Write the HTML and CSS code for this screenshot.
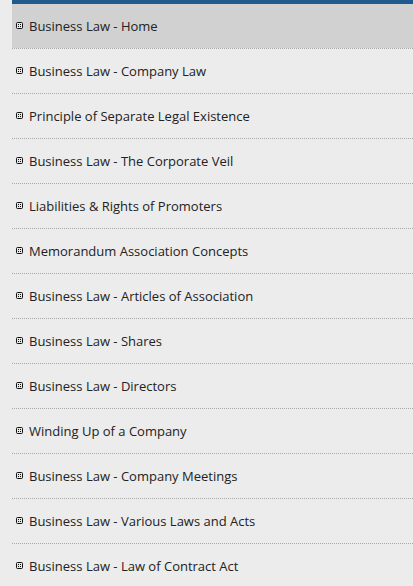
FILE: index.html
```html
<!DOCTYPE html>
<html>
<head>
<meta charset="utf-8">
<link rel="stylesheet" href="styles.css">
</head>
<body>
<nav class="sidebar">
  <ul class="menu">
    <li class="item active"><a href="#"><svg class="bullet" width="7" height="7" viewBox="0 0 7 7"><rect x="0.5" y="0.5" width="6" height="6" rx="1" fill="#e8e8e8" stroke="#111"/><rect x="2" y="2" width="1" height="1" fill="#111"/><rect x="4" y="2" width="1" height="1" fill="#111"/><rect x="2" y="4" width="1" height="1" fill="#111"/><rect x="4" y="4" width="1" height="1" fill="#111"/></svg><span>Business Law - Home</span></a></li>
    <li class="item"><a href="#"><svg class="bullet" width="7" height="7" viewBox="0 0 7 7"><rect x="0.5" y="0.5" width="6" height="6" rx="1" fill="#e8e8e8" stroke="#111"/><rect x="2" y="2" width="1" height="1" fill="#111"/><rect x="4" y="2" width="1" height="1" fill="#111"/><rect x="2" y="4" width="1" height="1" fill="#111"/><rect x="4" y="4" width="1" height="1" fill="#111"/></svg><span>Business Law - Company Law</span></a></li>
    <li class="item"><a href="#"><svg class="bullet" width="7" height="7" viewBox="0 0 7 7"><rect x="0.5" y="0.5" width="6" height="6" rx="1" fill="#e8e8e8" stroke="#111"/><rect x="2" y="2" width="1" height="1" fill="#111"/><rect x="4" y="2" width="1" height="1" fill="#111"/><rect x="2" y="4" width="1" height="1" fill="#111"/><rect x="4" y="4" width="1" height="1" fill="#111"/></svg><span>Principle of Separate Legal Existence</span></a></li>
    <li class="item"><a href="#"><svg class="bullet" width="7" height="7" viewBox="0 0 7 7"><rect x="0.5" y="0.5" width="6" height="6" rx="1" fill="#e8e8e8" stroke="#111"/><rect x="2" y="2" width="1" height="1" fill="#111"/><rect x="4" y="2" width="1" height="1" fill="#111"/><rect x="2" y="4" width="1" height="1" fill="#111"/><rect x="4" y="4" width="1" height="1" fill="#111"/></svg><span>Business Law - The Corporate Veil</span></a></li>
    <li class="item"><a href="#"><svg class="bullet" width="7" height="7" viewBox="0 0 7 7"><rect x="0.5" y="0.5" width="6" height="6" rx="1" fill="#e8e8e8" stroke="#111"/><rect x="2" y="2" width="1" height="1" fill="#111"/><rect x="4" y="2" width="1" height="1" fill="#111"/><rect x="2" y="4" width="1" height="1" fill="#111"/><rect x="4" y="4" width="1" height="1" fill="#111"/></svg><span>Liabilities &amp; Rights of Promoters</span></a></li>
    <li class="item"><a href="#"><svg class="bullet" width="7" height="7" viewBox="0 0 7 7"><rect x="0.5" y="0.5" width="6" height="6" rx="1" fill="#e8e8e8" stroke="#111"/><rect x="2" y="2" width="1" height="1" fill="#111"/><rect x="4" y="2" width="1" height="1" fill="#111"/><rect x="2" y="4" width="1" height="1" fill="#111"/><rect x="4" y="4" width="1" height="1" fill="#111"/></svg><span>Memorandum Association Concepts</span></a></li>
    <li class="item"><a href="#"><svg class="bullet" width="7" height="7" viewBox="0 0 7 7"><rect x="0.5" y="0.5" width="6" height="6" rx="1" fill="#e8e8e8" stroke="#111"/><rect x="2" y="2" width="1" height="1" fill="#111"/><rect x="4" y="2" width="1" height="1" fill="#111"/><rect x="2" y="4" width="1" height="1" fill="#111"/><rect x="4" y="4" width="1" height="1" fill="#111"/></svg><span>Business Law - Articles of Association</span></a></li>
    <li class="item"><a href="#"><svg class="bullet" width="7" height="7" viewBox="0 0 7 7"><rect x="0.5" y="0.5" width="6" height="6" rx="1" fill="#e8e8e8" stroke="#111"/><rect x="2" y="2" width="1" height="1" fill="#111"/><rect x="4" y="2" width="1" height="1" fill="#111"/><rect x="2" y="4" width="1" height="1" fill="#111"/><rect x="4" y="4" width="1" height="1" fill="#111"/></svg><span>Business Law - Shares</span></a></li>
    <li class="item"><a href="#"><svg class="bullet" width="7" height="7" viewBox="0 0 7 7"><rect x="0.5" y="0.5" width="6" height="6" rx="1" fill="#e8e8e8" stroke="#111"/><rect x="2" y="2" width="1" height="1" fill="#111"/><rect x="4" y="2" width="1" height="1" fill="#111"/><rect x="2" y="4" width="1" height="1" fill="#111"/><rect x="4" y="4" width="1" height="1" fill="#111"/></svg><span>Business Law - Directors</span></a></li>
    <li class="item"><a href="#"><svg class="bullet" width="7" height="7" viewBox="0 0 7 7"><rect x="0.5" y="0.5" width="6" height="6" rx="1" fill="#e8e8e8" stroke="#111"/><rect x="2" y="2" width="1" height="1" fill="#111"/><rect x="4" y="2" width="1" height="1" fill="#111"/><rect x="2" y="4" width="1" height="1" fill="#111"/><rect x="4" y="4" width="1" height="1" fill="#111"/></svg><span>Winding Up of a Company</span></a></li>
    <li class="item"><a href="#"><svg class="bullet" width="7" height="7" viewBox="0 0 7 7"><rect x="0.5" y="0.5" width="6" height="6" rx="1" fill="#e8e8e8" stroke="#111"/><rect x="2" y="2" width="1" height="1" fill="#111"/><rect x="4" y="2" width="1" height="1" fill="#111"/><rect x="2" y="4" width="1" height="1" fill="#111"/><rect x="4" y="4" width="1" height="1" fill="#111"/></svg><span>Business Law - Company Meetings</span></a></li>
    <li class="item"><a href="#"><svg class="bullet" width="7" height="7" viewBox="0 0 7 7"><rect x="0.5" y="0.5" width="6" height="6" rx="1" fill="#e8e8e8" stroke="#111"/><rect x="2" y="2" width="1" height="1" fill="#111"/><rect x="4" y="2" width="1" height="1" fill="#111"/><rect x="2" y="4" width="1" height="1" fill="#111"/><rect x="4" y="4" width="1" height="1" fill="#111"/></svg><span>Business Law - Various Laws and Acts</span></a></li>
    <li class="item"><a href="#"><svg class="bullet" width="7" height="7" viewBox="0 0 7 7"><rect x="0.5" y="0.5" width="6" height="6" rx="1" fill="#e8e8e8" stroke="#111"/><rect x="2" y="2" width="1" height="1" fill="#111"/><rect x="4" y="2" width="1" height="1" fill="#111"/><rect x="2" y="4" width="1" height="1" fill="#111"/><rect x="4" y="4" width="1" height="1" fill="#111"/></svg><span>Business Law - Law of Contract Act</span></a></li>
  </ul>
</nav>
</body>
</html>
```
FILE: styles.css
```css
html, body {
  margin: 0;
  padding: 0;
  background: #ececec;
}
body {
  font-family: "Open Sans", "Liberation Sans", sans-serif;
  font-size: 13px;
  color: #222;
  overflow: hidden;
}
.sidebar {
  margin-left: 12px;
  border-top: 4px solid #1e5a8e;
}
.menu {
  list-style: none;
  margin: 0;
  padding: 0;
}
.item {
  border-bottom: 1px dotted #a8a8a8;
}
.item a {
  display: flex;
  align-items: center;
  height: 44px;
  padding-left: 4px;
  color: #222;
  text-decoration: none;
}
.item.active a {
  background: #d1d1d1;
}
.bullet {
  flex: none;
  margin-right: 6px;
  position: relative;
  top: -1px;
}
```
